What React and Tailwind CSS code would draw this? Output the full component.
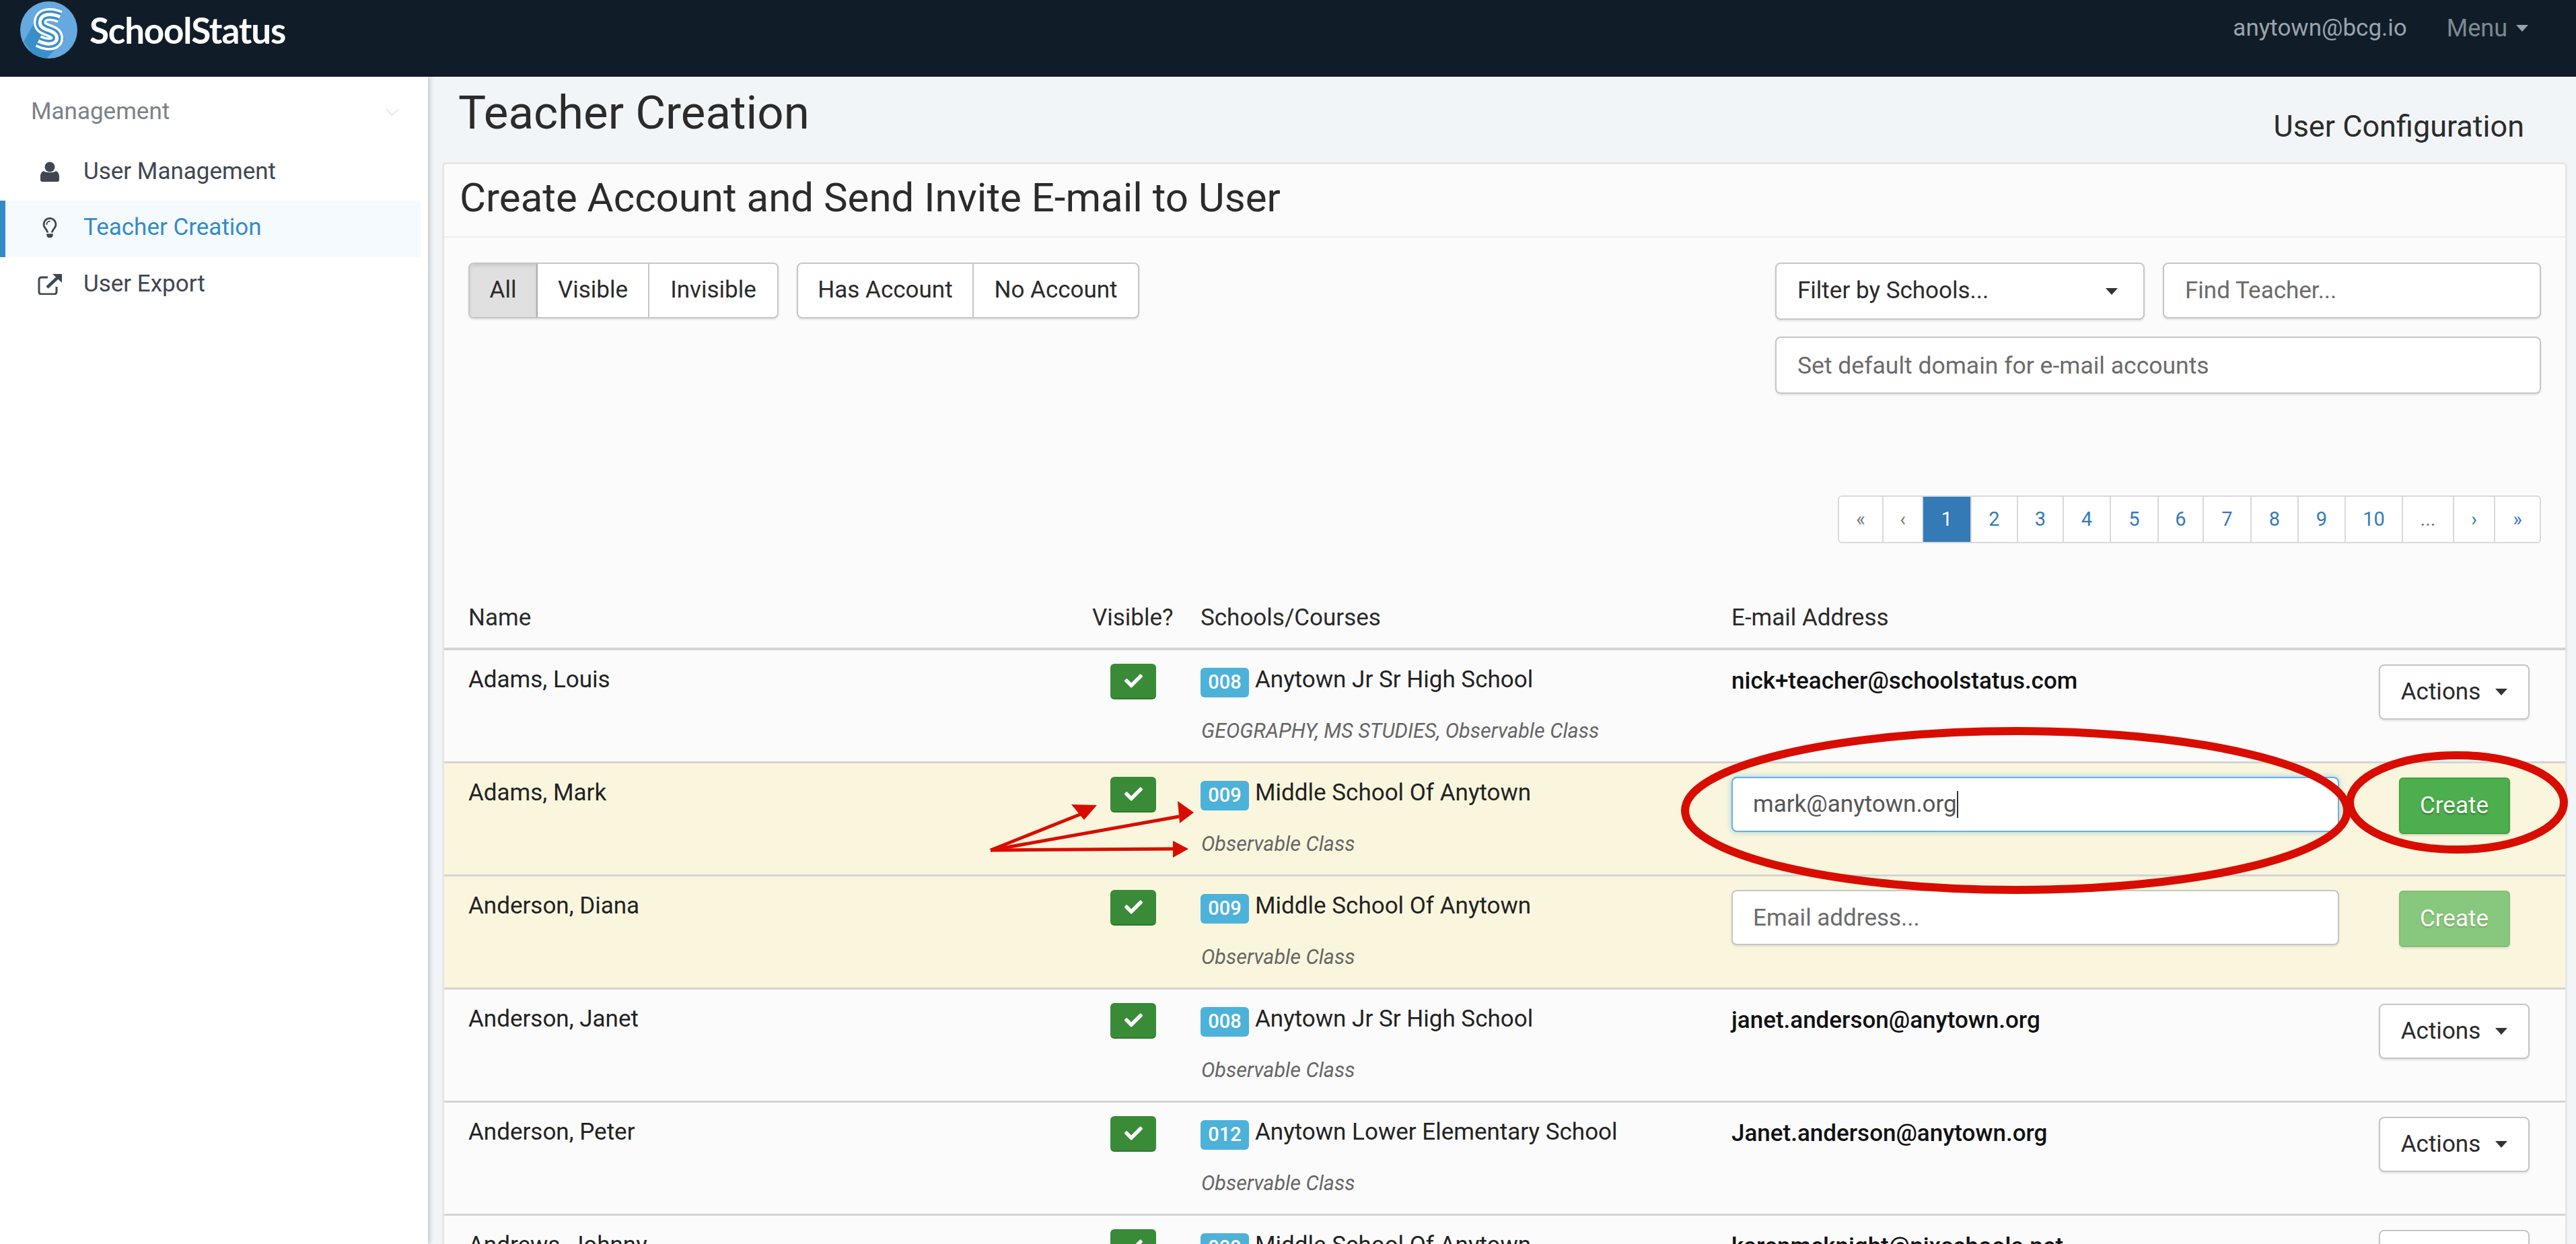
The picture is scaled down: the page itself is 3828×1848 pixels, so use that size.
import { FaCheck, FaRegLightbulb } from 'react-icons/fa'

const teachers = [
  { name: 'Adams, Louis', code: '008', school: 'Anytown Jr Sr High School', courses: 'GEOGRAPHY, MS STUDIES, Observable Class', email: 'nick+teacher@schoolstatus.com' },
  { name: 'Adams, Mark', code: '009', school: 'Middle School Of Anytown', courses: 'Observable Class', typed: 'mark@anytown.org' },
  { name: 'Anderson, Diana', code: '009', school: 'Middle School Of Anytown', courses: 'Observable Class', pending: true },
  { name: 'Anderson, Janet', code: '008', school: 'Anytown Jr Sr High School', courses: 'Observable Class', email: 'janet.anderson@anytown.org' },
  { name: 'Anderson, Peter', code: '012', school: 'Anytown Lower Elementary School', courses: 'Observable Class', email: 'Janet.anderson@anytown.org' },
  { name: 'Andrews, Johnny', code: '009', school: 'Middle School Of Anytown', courses: 'Observable Class', email: 'karenmcknight@nixschools.net' },
]

const pages = [
  { label: '«', className: 'w-[66px] text-[#777]' },
  { label: '‹', className: 'w-[59px] text-[#777]' },
  { label: '1', className: 'w-[72px] bg-[#337ab7] text-white' },
  { label: '2', className: 'w-[69px] text-[#337ab7]' },
  { label: '3', className: 'w-[68px] text-[#337ab7]' },
  { label: '4', className: 'w-[70px] text-[#337ab7]' },
  { label: '5', className: 'w-[71px] text-[#337ab7]' },
  { label: '6', className: 'w-[67px] text-[#337ab7]' },
  { label: '7', className: 'w-[71px] text-[#337ab7]' },
  { label: '8', className: 'w-[70px] text-[#337ab7]' },
  { label: '9', className: 'w-[70px] text-[#337ab7]' },
  { label: '10', className: 'w-[85px] text-[#337ab7]' },
  { label: '...', className: 'w-[76px] text-[#777]' },
  { label: '›', className: 'w-[61px] text-[#337ab7]' },
  { label: '»', className: 'w-[66px] text-[#337ab7]' },
]

const controlClass = 'border-2 border-[#c6c6c6] rounded-[8px] bg-white shadow-[0_2px_3px_rgba(0,0,0,0.1)]'

const logoPath = 'M59 23 C52 20 44 19 39 20 C29 22 27 33 32 38 C36 42 44 43 49 46 C56 50 56 58 51 61 C45 65 35 63 27 59'

function Logo() {
  return (
    <svg viewBox="0 0 85 85" className="w-[85px] h-[85px] shrink-0">
      <defs>
        <clipPath id="logoCircle">
          <circle cx="42.5" cy="42.5" r="42.5" />
        </clipPath>
      </defs>
      <circle cx="42.5" cy="42.5" r="42.5" fill="#66a9e0" />
      <polygon points="5,60 23,28 66,56 38,86 20,80" fill="#3a8fc9" clipPath="url(#logoCircle)" />
      <g fill="none">
        <path d={logoPath} stroke="#fff" strokeWidth="19" />
        <path d={logoPath} stroke="#3a8fc9" strokeWidth="12" />
        <path d={logoPath} stroke="#fff" strokeWidth="5" />
      </g>
    </svg>
  )
}

function UserIcon() {
  return (
    <svg viewBox="0 0 28 30" className="w-[28px] h-[30px]" fill="#3f4750">
      <circle cx="14" cy="8" r="7.5" />
      <path d="M5 14 C8 17 20 17 23 14 C26 15 28 18 28 22 L28 27 C28 29 27 30 25 30 L3 30 C1 30 0 29 0 27 L0 22 C0 18 2 15 5 14 Z" />
    </svg>
  )
}

function ExportIcon() {
  return (
    <svg viewBox="0 0 36 31" className="w-[36px] h-[31px]" fill="none" stroke="#3f4750" strokeWidth="3">
      <path d="M15 5 L6 5 C3 5 2 6 2 9 L2 26 C2 29 3 30 6 30 L24 30 C27 30 28 29 28 26 L28 19" />
      <path d="M14 20 L30 5" strokeWidth="4.5" />
      <path d="M22 0 L36 0 L36 13 Z" fill="#3f4750" stroke="none" />
    </svg>
  )
}

function Caret({ className }) {
  return <span className={`w-0 h-0 border-x-[9px] border-x-transparent border-t-[10px] ${className}`} />
}

function Sidebar() {
  return (
    <aside className="w-[636px] shrink-0 bg-white shadow-[3px_0_6px_rgba(0,0,0,0.18)] z-10 pr-[11px]">
      <div className="h-[102px] flex items-center justify-between pt-[3px] pl-[46px] pr-[32px] text-[35px] text-[#7b8289]">
        Management
        <svg viewBox="0 0 20 12" className="w-[20px] h-[12px]" fill="none" stroke="#e8eaec" strokeWidth="2"><path d="M1 1 L10 10 L19 1" /></svg>
      </div>
      <div className="h-[82px] flex items-center pb-[4px] text-[35px] text-[#3f4750]">
        <span className="w-[124px] flex justify-center pl-[23px]"><UserIcon /></span>
        User Management
      </div>
      <div className="h-[84px] flex items-center pb-[4px] text-[35px] text-[#348bc8] bg-[#f5faff] border-l-[8px] border-[#348bc8]">
        <span className="w-[116px] flex justify-center pl-[15px]"><FaRegLightbulb className="text-[30px] text-[#3f4750]" /></span>
        Teacher Creation
      </div>
      <div className="h-[84px] flex items-center pb-[4px] text-[35px] text-[#3f4750]">
        <span className="w-[124px] flex justify-center pl-[23px]"><ExportIcon /></span>
        User Export
      </div>
    </aside>
  )
}

function ButtonGroup({ items }) {
  return (
    <div className={`flex h-[83px] overflow-hidden ${controlClass}`}>
      {items.map((item) => (
        <div
          key={item.label}
          className={`${item.width} flex items-center justify-center text-[35px] text-[#2a2a2a] border-r-2 border-[#c6c6c6] last:border-r-0 ${item.active ? 'bg-[#e0e0e0] border-r-[#adadad] shadow-[inset_0_3px_5px_rgba(0,0,0,0.1)]' : ''}`}
        >
          {item.label}
        </div>
      ))}
    </div>
  )
}

function Filters() {
  return (
    <div className="flex justify-between pt-[37px] pl-[36px] pr-[36px]">
      <div className="flex gap-[27px] items-start">
        <ButtonGroup items={[
          { label: 'All', width: 'w-[101px]', active: true },
          { label: 'Visible', width: 'w-[166px]' },
          { label: 'Invisible', width: 'w-[190px]' },
        ]} />
        <ButtonGroup items={[
          { label: 'Has Account', width: 'w-[261px]' },
          { label: 'No Account', width: 'w-[244px]' },
        ]} />
      </div>
      <div className="w-[1138px] flex flex-col">
        <div className="flex gap-[27px] items-start">
          <div className={`w-[549px] h-[85px] flex items-center justify-between pl-[31px] pr-[38px] text-[35px] text-[#2a2a2a] ${controlClass}`}>
            Filter by Schools...
            <Caret className="border-t-[#333]" />
          </div>
          <input placeholder="Find Teacher..." className={`w-[562px] h-[83px] pl-[31px] text-[35px] outline-none placeholder:text-[#6b6b6b] ${controlClass}`} />
        </div>
        <input placeholder="Set default domain for e-mail accounts" className={`w-full h-[85px] mt-[25px] pl-[31px] text-[35.5px] outline-none placeholder:text-[#6b6b6b] ${controlClass}`} />
        <div className="flex justify-end mt-[151px] text-[29px]">
          <div className="flex h-[71px] border-2 border-[#d9d9d9] rounded-[6px] overflow-hidden bg-white">
            {pages.map((p) => (
              <div key={p.label} className={`${p.className} flex items-center justify-center border-r-2 border-[#d9d9d9] last:border-r-0`}>{p.label}</div>
            ))}
          </div>
        </div>
      </div>
    </div>
  )
}

function TeacherRow({ teacher }) {
  const editing = teacher.typed || teacher.pending
  return (
    <div className={`grid grid-cols-[990px_134px_789px_927px_294px] h-[168px] border-b-[3px] border-[#d4d4d4] ${editing ? 'bg-[#faf6dd]' : ''}`}>
      <div className="pl-[36px] pt-[20px] text-[35px] leading-[48px] text-[#222]">{teacher.name}</div>
      <div className="pt-[20px]">
        <div className="w-[68px] h-[53px] flex items-center justify-center rounded-[6px] bg-[#398b37] border-b-2 border-[#2d7a2c] text-white">
          <FaCheck className="text-[27px]" />
        </div>
      </div>
      <div>
        <div className="flex items-center pt-[26px] h-[70px]">
          <span className="w-[72px] h-[44px] flex items-center justify-center rounded-[6px] bg-[#4db2d9] text-white text-[29px] font-medium">{teacher.code}</span>
          <span className="ml-[9px] text-[35px] text-[#222] relative top-[-4px]">{teacher.school}</span>
        </div>
        <div className="pl-[1px] mt-[32px] text-[30.5px] leading-[36px] italic text-[#666]">{teacher.courses}</div>
      </div>
      <div className="pt-[20px] text-[35px] text-[#111]">
        {teacher.email && <div className="font-medium leading-[52px]">{teacher.email}</div>}
        {teacher.typed && (
          <div className="w-[903px] h-[82px] flex items-center pl-[30px] bg-white rounded-[8px] border-2 border-[#66afe9] shadow-[0_0_10px_rgba(102,175,233,0.6)] text-[#555]">
            {teacher.typed}
            <span className="w-[2px] h-[40px] bg-[#333]" />
          </div>
        )}
        {teacher.pending && (
          <input placeholder="Email address..." className={`w-[903px] h-[82px] pl-[30px] outline-none placeholder:text-[#6b6b6b] ${controlClass}`} />
        )}
      </div>
      <div className="pt-[21px] flex justify-center">
        {teacher.email && (
          <div className={`w-[224px] h-[82px] flex items-center justify-center gap-[22px] text-[35px] text-[#2a2a2a] ${controlClass}`}>
            Actions
            <Caret className="border-t-[#333]" />
          </div>
        )}
        {editing && (
          <div className={`w-[165px] h-[84px] flex items-center justify-center rounded-[6px] bg-[#4cae4c] border-2 border-[#45a145] text-white text-[35px] [text-shadow:0_2px_2px_rgba(0,0,0,0.3)] shadow-[0_2px_3px_rgba(0,0,0,0.15)] ${teacher.pending ? 'opacity-65' : ''}`}>
            Create
          </div>
        )}
      </div>
    </div>
  )
}

// the red markup someone drew over the screenshot
function Annotations() {
  return (
    <svg viewBox="0 0 3828 1848" className="absolute left-0 top-0 w-[3828px] h-[1848px] pointer-events-none z-20" fill="none">
      <ellipse cx="2996" cy="1204" rx="492" ry="118" stroke="#d80d00" strokeWidth="12" />
      <ellipse cx="3651" cy="1192" rx="159" ry="70" stroke="#d80d00" strokeWidth="12" />
      <g stroke="#d80d00" strokeWidth="5">
        <path d="M1472 1263 L1612 1207" />
        <path d="M1472 1263 L1752 1213" />
        <path d="M1472 1263 L1745 1261" />
      </g>
      <g fill="#d80d00">
        <polygon points="1630,1196 1592,1195 1611,1218" />
        <polygon points="1774,1207 1750,1190 1753,1223" />
        <polygon points="1766,1261 1743,1249 1743,1274" />
      </g>
    </svg>
  )
}

export default function App() {
  return (
    <div className="relative w-[3828px] h-[1848px] overflow-hidden flex flex-col font-['Roboto',sans-serif] bg-[#f2f5f8]">
      <header className="h-[114px] shrink-0 bg-[#101d29] flex items-start justify-between pl-[30px] pr-[71px]">
        <div className="flex items-center pt-[2px] gap-[18px]">
          <Logo />
          <span className="font-['Lato',sans-serif] font-bold text-[53px] text-white leading-none tracking-[-1.2px]">SchoolStatus</span>
        </div>
        <div className="flex items-center h-[84px] text-[35px] text-[#9aa4ad] gap-[59px]">
          <span>anytown@bcg.io</span>
          <span className="flex items-center gap-[13px] text-[#7e8993] text-[36px]">
            Menu
            <Caret className="border-t-[#9aa4ad]" />
          </span>
        </div>
      </header>
      <div className="flex flex-1 min-h-0">
        <Sidebar />
        <main className="flex-1 min-w-0 pl-[21px] pr-[13px]">
          <div className="h-[127px] flex items-start justify-between pl-[24px] pr-[64px]">
            <h1 className="pt-[14px] text-[69px] leading-[80px] text-[#2b2b2b]">Teacher Creation</h1>
            <div className="pt-[48px] text-[45px] leading-[52px] text-[#2b2b2b]">User Configuration</div>
          </div>
          <div className="bg-[#fbfbfb] border-[3px] border-[#e6e6e6] rounded-t-[6px]">
            <div className="h-[109px] flex items-center pb-[8px] pl-[23px] border-b-2 border-[#ededed] text-[60px] text-[#2b2b2b]">
              Create Account and Send Invite E-mail to User
            </div>
            <Filters />
            <div className="grid grid-cols-[990px_134px_789px_927px_294px] h-[159px] items-end pb-[18px] border-b-4 border-[#d4d4d4] text-[35px] text-[#2a2a2a]">
              <div className="pl-[36px]">Name</div>
              <div className="ml-[-27px]">Visible?</div>
              <div>Schools/Courses</div>
              <div>E-mail Address</div>
              <div />
            </div>
            {teachers.map((t) => <TeacherRow key={t.name} teacher={t} />)}
          </div>
        </main>
      </div>
      <Annotations />
    </div>
  )
}
